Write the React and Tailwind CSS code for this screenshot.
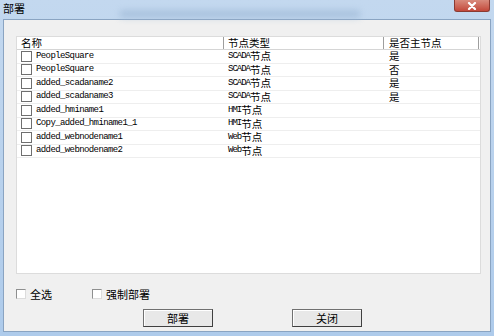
import React from 'react'

const rows = [
    { name: 'PeopleSquare', type: 'SCADA节点', master: '是' },
    { name: 'PeopleSquare', type: 'SCADA节点', master: '否' },
    { name: 'added_scadaname2', type: 'SCADA节点', master: '是' },
    { name: 'added_scadaname3', type: 'SCADA节点', master: '是' },
    { name: 'added_hminame1', type: 'HMI节点', master: '' },
    { name: 'Copy_added_hminame1_1', type: 'HMI节点', master: '' },
    { name: 'added_webnodename1', type: 'Web节点', master: '' },
    { name: 'added_webnodename2', type: 'Web节点', master: '' },
]

const cjk = "font-['SimSun','Noto_Sans_CJK_SC',sans-serif]"
const mono = "font-['Liberation_Mono','Noto_Sans_CJK_SC',monospace]"

const Cell = ({ text }) => {
    // ascii part in mono, chinese in cjk font
    const m = text.match(/^([A-Za-z]*)(.*)$/)
    return (
        <div className="flex items-center whitespace-nowrap h-[12px]">
            <span className={`${mono} text-[9px] tracking-[-1px] leading-none`}>{m[1]}</span>
            <span className={`${cjk} text-[10.5px] leading-none`}>{m[2]}</span>
        </div>
    )
}

const Button = ({ label }) => (
    <button className={`w-[70px] h-[18px] border border-[#707070] border-r-[#404040] border-b-[#404040] bg-[#e8e8e8] text-[11px] text-black ${cjk} leading-none flex items-center justify-center shadow-[inset_1px_1px_0_#ffffff]`}>
        {label}
    </button>
)

export default function App() {
    return (
        <div className="w-[494px] h-[336px] bg-gradient-to-b from-[#c3d8ef] to-[#aecbeb] flex flex-col overflow-hidden">
            {/* title bar */}
            <div className="h-[19px] flex items-start justify-between relative">
                <div className="absolute left-[120px] top-[10px] w-[240px] h-[8px] bg-[#9bb6d4] opacity-60 blur-[3px]" />
                <span className={`${cjk} text-[11px] text-black pl-[3px] pt-[3px] leading-none relative`}>部署</span>
                <div className="mr-[4px] w-[36px] h-[12px] rounded-b-[3px] border border-t-0 border-[#8a3a32] bg-gradient-to-b from-[#d88a7c] to-[#c2473a] flex items-center justify-center">
                    <svg width="10" height="8" viewBox="0 0 10 8">
                        <path d="M2 1 L8 7 M8 1 L2 7" stroke="#fff" strokeWidth="2.2" strokeLinecap="round" />
                    </svg>
                </div>
            </div>

            {/* client area */}
            <div className="mx-[3px] h-[313px] w-[488px] bg-[#f0f0f0] border border-[#8aa4c2] flex flex-col">
                <div className="ml-[12px] mt-[16px] w-[465px] h-[238px] bg-white border border-[#dcdcdc] flex flex-col">
                    {/* header */}
                    <div className={`flex h-[13px] border-b border-[#d5d5d5] ${cjk} text-[10.5px] leading-none text-black shrink-0 items-start`}>
                        <div className="w-[207px] pl-[4px] border-r border-[#9e9e9e] h-[12px] pt-[1px]">名称</div>
                        <div className="w-[160px] pl-[4px] border-r border-[#9e9e9e] h-[12px] pt-[1px]">节点类型</div>
                        <div className="w-[95px] pl-[5px] border-r border-[#9e9e9e] h-[12px] pt-[1px]">是否主节点</div>
                    </div>
                    {rows.map((r, i) => (
                        <div key={i} className="flex items-center h-[13.5px] shrink-0 border-b border-[#eeeeee] text-black">
                            <div className="w-[207px] flex items-center pl-[4px] gap-[4px]">
                                <span className="w-[11px] h-[11px] border border-[#6f6f6f] bg-white shrink-0" />
                                <span className={`${mono} text-[9px] tracking-[-0.6px] leading-none whitespace-nowrap`}>{r.name}</span>
                            </div>
                            <div className="w-[160px] pl-[4px]">
                                <Cell text={r.type} />
                            </div>
                            <div className={`pl-[5px] ${cjk} text-[10.5px] leading-none h-[12px] flex items-center`}>{r.master}</div>
                        </div>
                    ))}
                </div>

                {/* options */}
                <div className={`flex items-center mt-[14px] ml-[12px] h-[12px] ${cjk} text-[11px] leading-none text-black`}>
                    <span className="w-[10px] h-[10px] border border-[#8e8f8f] border-r-[#dcdcdc] border-b-[#dcdcdc] bg-white" />
                    <span className="ml-[4px]">全选</span>
                    <span className="ml-[40px] w-[10px] h-[10px] border border-[#8e8f8f] border-r-[#dcdcdc] border-b-[#dcdcdc] bg-white" />
                    <span className="ml-[4px]">强制部署</span>
                </div>

                {/* buttons */}
                <div className="flex mt-[9px] ml-[139px] gap-[79px]">
                    <Button label="部署" />
                    <Button label="关闭" />
                </div>
            </div>
        </div>
    )
}
